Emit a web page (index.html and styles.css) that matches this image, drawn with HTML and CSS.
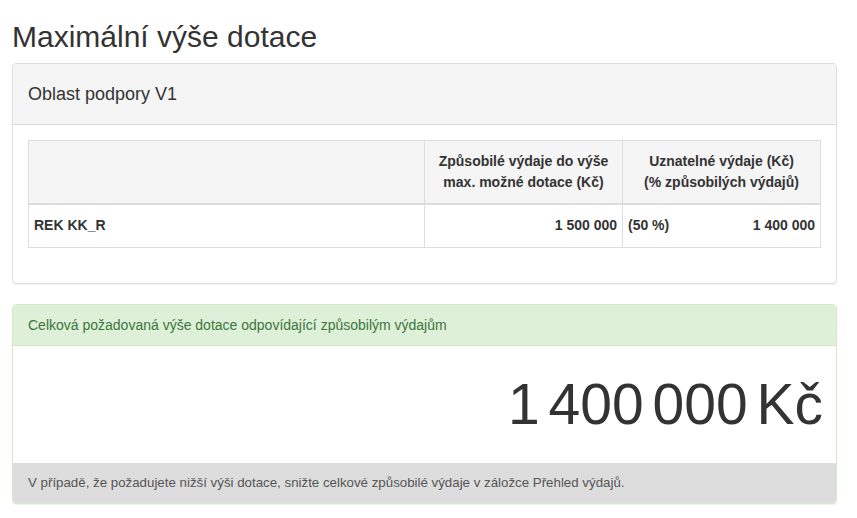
FILE: index.html
```html
<!DOCTYPE html>
<html>
	<head>
		<meta charset="utf-8">
		<title>Maximální výše dotace</title>
		<link rel="stylesheet" href="styles.css">
	</head>
	<body>
		<div class="page">
			<h2 class="title">Maximální výše dotace</h2>

			<div class="panel">
				<div class="panel-heading">Oblast podpory V1</div>
				<div class="panel-body">
					<table class="grid">
						<thead>
							<tr>
								<th class="col-name"></th>
								<th class="col-num">Způsobilé výdaje do výše<br>max. možné dotace (Kč)</th>
								<th class="col-num">Uznatelné výdaje (Kč)<br>(% způsobilých výdajů)</th>
							</tr>
						</thead>
						<tbody>
							<tr>
								<td>REK KK_R</td>
								<td class="num">1 500 000</td>
								<td><div class="split"><span>(50 %)</span><span>1 400 000</span></div></td>
							</tr>
						</tbody>
					</table>
				</div>
			</div>

			<div class="panel panel-success">
				<div class="panel-heading">Celková požadovaná výše dotace odpovídající způsobilým výdajům</div>
				<div class="panel-body">
					<div class="total">1 400 000 Kč</div>
				</div>
				<div class="panel-footer">V případě, že požadujete nižší výši dotace, snižte celkové způsobilé výdaje v záložce Přehled výdajů.</div>
			</div>
		</div>
	</body>
</html>
```

FILE: styles.css
```css
*{
	margin: 0;
	padding: 0;
	box-sizing: border-box;
}
body{
	font-family: "Liberation Sans", Arial, sans-serif;
	font-size: 14px;
	line-height: 1.42857;
	color: #333;
	background: #fff;
}
.page{
	padding: 0 20px 0 12px;
}
.title{
	font-size: 30px;
	font-weight: normal;
	line-height: 1.1;
	margin: 20px 0 10px;
}
.panel{
	border: 1px solid #ddd;
	border-radius: 4px;
	background: #fff;
	margin-bottom: 20px;
	box-shadow: 0 1px 1px rgba(0,0,0,.05);
	overflow: hidden;
}
.panel-heading{
	background: #f5f5f5;
	border-bottom: 1px solid #ddd;
	padding: 20px 15px;
	font-size: 18px;
	line-height: 20px;
}
.panel-body{
	padding: 15px;
}
.grid{
	width: 100%;
	border-collapse: collapse;
	margin-bottom: 20px;
	line-height: 21px;
	font-weight: bold;
}
.grid th,
.grid td{
	border: 1px solid #ddd;
	padding: 10px 5px;
}
.grid td{
	padding-bottom: 11px;
}
.grid th{
	background: #f5f5f5;
	border-bottom-width: 2px;
	text-align: center;
}
.col-name{
	width: 396px;
}
.col-num{
	width: 198px;
}
.grid td.num{
	text-align: right;
}
.split{
	display: flex;
	justify-content: space-between;
}
.panel-success{
	border-color: #d6e9c6;
}
.panel-success .panel-heading{
	background: #dff0d8;
	border-bottom-color: #d6e9c6;
	color: #3c763d;
	font-size: 14px;
	padding: 10px 15px;
}
.total{
	text-align: right;
	font-size: 57px;
	line-height: 87px;
	word-spacing: -7px;
	margin-right: -2px;
}
.panel-footer{
	background: #ddd;
	color: #555;
	font-size: 13.3px;
	line-height: 20px;
	padding: 10px 15px;
}
```
